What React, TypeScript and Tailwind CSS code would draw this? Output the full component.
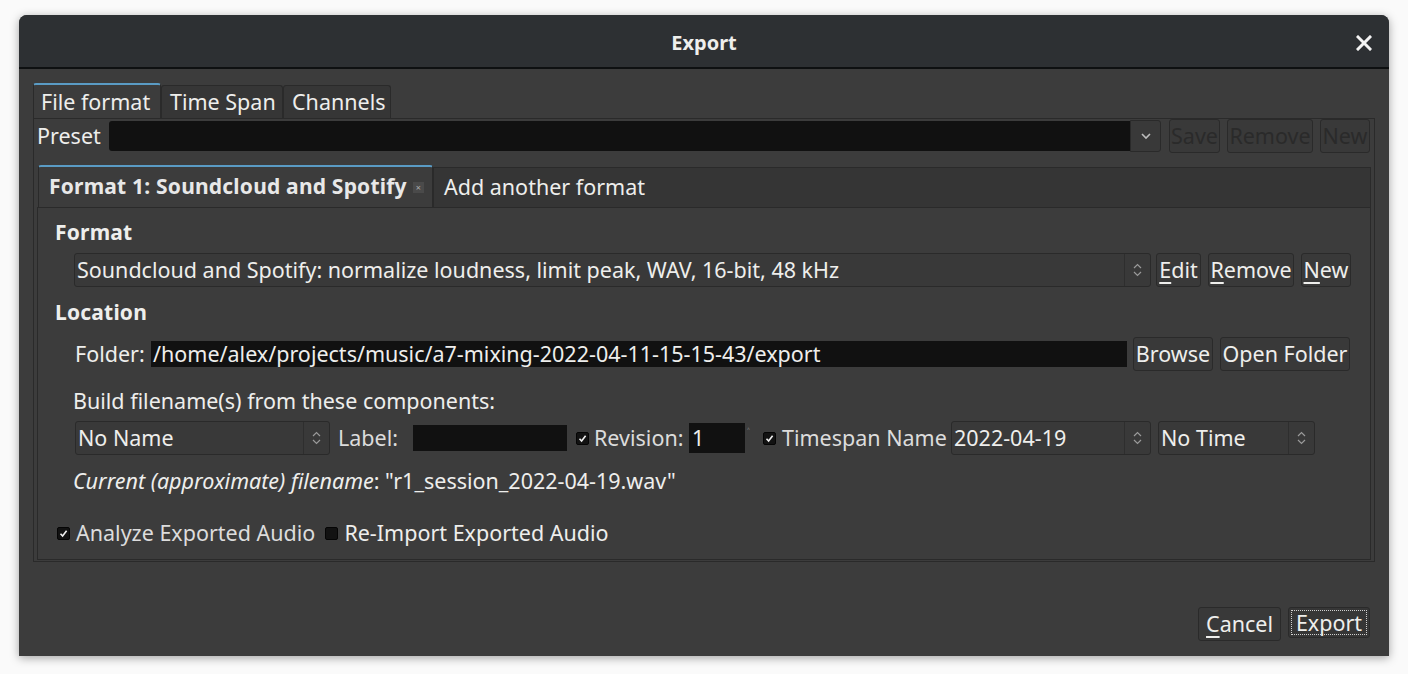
import React from 'react';

const FONT = { fontFamily: '"Noto Sans", "Open Sans", sans-serif' };

// Small up/down chevrons used by the GTK combo boxes
function SpinIcon() {
    return (
        <svg width="9" height="16" viewBox="0 0 9 16" fill="none" stroke="#9a9a9a" strokeWidth="1.2">
            <path d="M1 6 L4.5 2.5 L8 6" />
            <path d="M1 10 L4.5 13.5 L8 10" />
        </svg>
    );
}

function Check({ checked }: { checked: boolean }) {
    return (
        <span className="w-[13px] h-[13px] bg-[#121212] border border-[#050505] rounded-[2px] flex items-center justify-center shrink-0">
            {checked && (
                <svg width="9" height="9" viewBox="0 0 9 9" fill="none" stroke="#f0f0f0" strokeWidth="1.6">
                    <path d="M1.5 4.8 L3.6 7 L7.6 1.8" />
                </svg>
            )}
        </span>
    );
}

function Btn({ children, disabled, className = '' }: { children: React.ReactNode; disabled?: boolean; className?: string }) {
    return (
        <button
            className={`h-[34px] px-0 rounded-[3px] border border-[#2a2a2a] bg-[#393939] text-[21.5px] leading-none whitespace-nowrap flex items-center justify-center ${disabled ? 'text-[#2a2a2a]' : 'text-[#eeeeec]'} ${className}`}
        >
            {children}
        </button>
    );
}

function Combo({ text, className = '' }: { text: string; className?: string }) {
    return (
        <div className={`h-[34px] rounded-[3px] border border-[#2a2a2a] bg-[#393939] flex items-center ${className}`}>
            <span className="flex-1 pl-[2px] text-[21.5px] text-[#eeeeec] whitespace-nowrap">{text}</span>
            <span className="h-full w-[26px] border-l border-[#2e2e2e] flex items-center justify-center">
                <SpinIcon />
            </span>
        </div>
    );
}

export default function App() {
    return (
        <div className="w-[1408px] h-[674px] bg-[#fafafa] pt-[15px] pl-[19px]" style={FONT}>
            <div className="w-[1370px] h-[641px] rounded-t-[8px] bg-[#3c3c3c] flex flex-col shadow-[0_2px_10px_rgba(0,0,0,0.35)] overflow-hidden">
                {/* Title bar */}
                <div className="h-[54px] bg-[#2d3033] border-b-2 border-[#0e1011] flex items-center justify-center relative shrink-0 pt-[3px]">
                    <span className="text-[20px] font-bold text-[#eeeeec]">Export</span>
                    <svg className="absolute right-[17px] top-[20px]" width="16" height="16" viewBox="0 0 16 16" stroke="#f4f4f4" strokeWidth="3" strokeLinecap="square">
                        <path d="M2 2 L14 14 M14 2 L2 14" />
                    </svg>
                </div>

                <div className="flex-1 flex flex-col pl-[14px] pr-[14px] pt-[14px]">
                    {/* Outer tabs */}
                    <div className="h-[35px] flex items-end text-[21.5px] text-[#eeeeec] leading-none">
                        <div className="h-[35px] w-[128px] border-t-2 border-t-[#5a9bc4] border-x border-x-[#2a2a2a] bg-[#3c3c3c] flex items-center pl-[7px] rounded-t-[3px]">File format</div>
                        <div className="h-[33px] w-[122px] border border-b-0 border-[#2a2a2a] bg-[#363636] flex items-center pl-[8px] rounded-t-[3px]">Time Span</div>
                        <div className="h-[33px] w-[108px] border border-b-0 border-[#2a2a2a] bg-[#363636] flex items-center pl-[8px] rounded-t-[3px]">Channels</div>
                    </div>

                    {/* Outer pane */}
                    <div className="h-[444px] border border-[#2a2a2a] flex flex-col px-[3px] pt-[1px]">
                        {/* Preset row */}
                        <div className="h-[32px] flex items-center">
                            <span className="text-[21.5px] text-[#eeeeec] w-[72px]">Preset</span>
                            <div className="h-[30px] w-[1021px] bg-[#111111] rounded-l-[3px]" />
                            <div className="h-[32px] w-[31px] border border-[#2a2a2a] bg-[#393939] rounded-r-[3px] flex items-center justify-center">
                                <svg width="12" height="8" viewBox="0 0 12 8" fill="none" stroke="#bdbdbd" strokeWidth="1.6">
                                    <path d="M2 2 L6 6 L10 2" />
                                </svg>
                            </div>
                            <Btn disabled className="h-[32px] w-[51px] ml-[8px]">Save</Btn>
                            <Btn disabled className="h-[32px] w-[86px] ml-[7px]">Remove</Btn>
                            <Btn disabled className="h-[32px] w-[50px] ml-[7px]">New</Btn>
                        </div>

                        {/* Inner tabs */}
                        <div className="mt-[13px] h-[42px] flex items-end pl-[1px]">
                            <div className="h-[42px] w-[395px] border-t-2 border-t-[#5a9bc4] border-x border-x-[#2a2a2a] bg-[#3c3c3c] flex items-center pl-[10px] rounded-t-[3px]">
                                <span className="text-[21px] font-bold tracking-[0.2px] text-[#e8e8e8] whitespace-nowrap">Format 1: Soundcloud and Spotify</span>
                                <span className="ml-[6px] w-[11px] h-[11px] bg-[#4a4a4a] text-[9px] leading-none text-[#aaaaaa] flex items-center justify-center shrink-0">×</span>
                            </div>
                            <div className="h-[40px] flex-1 border border-b-0 border-[#2a2a2a] bg-[#353535] flex items-center pl-[10px] text-[21.5px] text-[#eeeeec]">
                                Add another format
                            </div>
                        </div>

                        {/* Inner pane */}
                        <div className="h-[353px] border border-[#2a2a2a] flex flex-col pl-[17px] pr-[19px] text-[#eeeeec]">
                            <div className="mt-[12px] h-[26px] flex items-center text-[21px] font-bold tracking-[0.2px]">Format</div>
                            <div className="mt-[7px] ml-[19px] flex items-center">
                                <Combo className="flex-1" text="Soundcloud and Spotify: normalize loudness, limit peak, WAV, 16-bit, 48 kHz" />
                                <Btn className="w-[45px] ml-[5px]"><span className="underline underline-offset-4">E</span>dit</Btn>
                                <Btn className="w-[86px] ml-[7px]"><span className="underline underline-offset-4">R</span>emove</Btn>
                                <Btn className="w-[50px] ml-[7px]"><span className="underline underline-offset-4">N</span>ew</Btn>
                            </div>

                            <div className="mt-[13px] h-[26px] flex items-center text-[21px] font-bold tracking-[0.2px]">Location</div>
                            <div className="mt-[13px] ml-[20px] h-[30px] flex items-center text-[21.5px]">
                                <span className="w-[76px]">Folder:</span>
                                <div className="h-[26px] w-[976px] bg-[#111111] flex items-center pl-[2px] whitespace-nowrap">
                                    /home/alex/projects/music/a7-mixing-2022-04-11-15-15-43/export
                                </div>
                                <Btn className="h-[30px] w-[80px] ml-[6px]">Browse</Btn>
                                <Btn className="h-[30px] w-[130px] ml-[7px]">Open Folder</Btn>
                            </div>

                            <div className="mt-[19px] ml-[18px] h-[26px] flex items-center text-[21.5px]">Build filename(s) from these components:</div>
                            <div className="mt-[7px] ml-[20px] h-[34px] flex items-center text-[21.5px]">
                                <Combo className="w-[255px]" text="No Name" />
                                <span className="ml-[8px] w-[75px] text-[#dcdcdc]">Label:</span>
                                <div className="h-[26px] w-[154px] bg-[#111111]" />
                                <span className="ml-[9px]"><Check checked /></span>
                                <span className="ml-[5px] w-[95px] text-[#dcdcdc] whitespace-nowrap">Revision:</span>
                                <div className="h-[30px] w-[56px] bg-[#111111] flex items-center pl-[3px]">1</div>
                                <span className="ml-[2px] w-[16px] text-[10px] text-[#888] leading-none self-start mt-[6px]">˄</span>
                                <Check checked />
                                <span className="ml-[6px] w-[169px] text-[#dcdcdc] whitespace-nowrap">Timespan Name</span>
                                <Combo className="w-[200px]" text="2022-04-19" />
                                <Combo className="w-[157px] ml-[7px]" text="No Time" />
                            </div>

                            <div className="mt-[13px] ml-[18px] h-[26px] flex items-center text-[21.5px] whitespace-nowrap">
                                <span className="italic">Current (approximate) filename</span>
                                <span>: &quot;r1_session_2022-04-19.wav&quot;</span>
                            </div>

                            <div className="mt-[26px] ml-[2px] h-[26px] flex items-center text-[21.5px]">
                                <Check checked />
                                <span className="ml-[6px] text-[#dcdcdc]">Analyze Exported Audio</span>
                                <span className="ml-[10px]"><Check checked={false} /></span>
                                <span className="ml-[6px]">Re-Import Exported Audio</span>
                            </div>
                        </div>
                    </div>

                    {/* Dialog buttons */}
                    <div className="mt-[45px] flex justify-end pr-[5px]">
                        <Btn className="h-[31px] w-[83px] bg-[#363636]"><span className="underline underline-offset-4">C</span>ancel</Btn>
                        <button className="ml-[7px] h-[31px] w-[82px] rounded-[3px] border border-[#2a2a2a] bg-[#363636] p-[2px]">
                            <span className="h-full w-full border border-dotted border-[#cfcfcf] flex items-center justify-center text-[21.5px] text-[#eeeeec] leading-none">Export</span>
                        </button>
                    </div>
                </div>
            </div>
        </div>
    );
}
